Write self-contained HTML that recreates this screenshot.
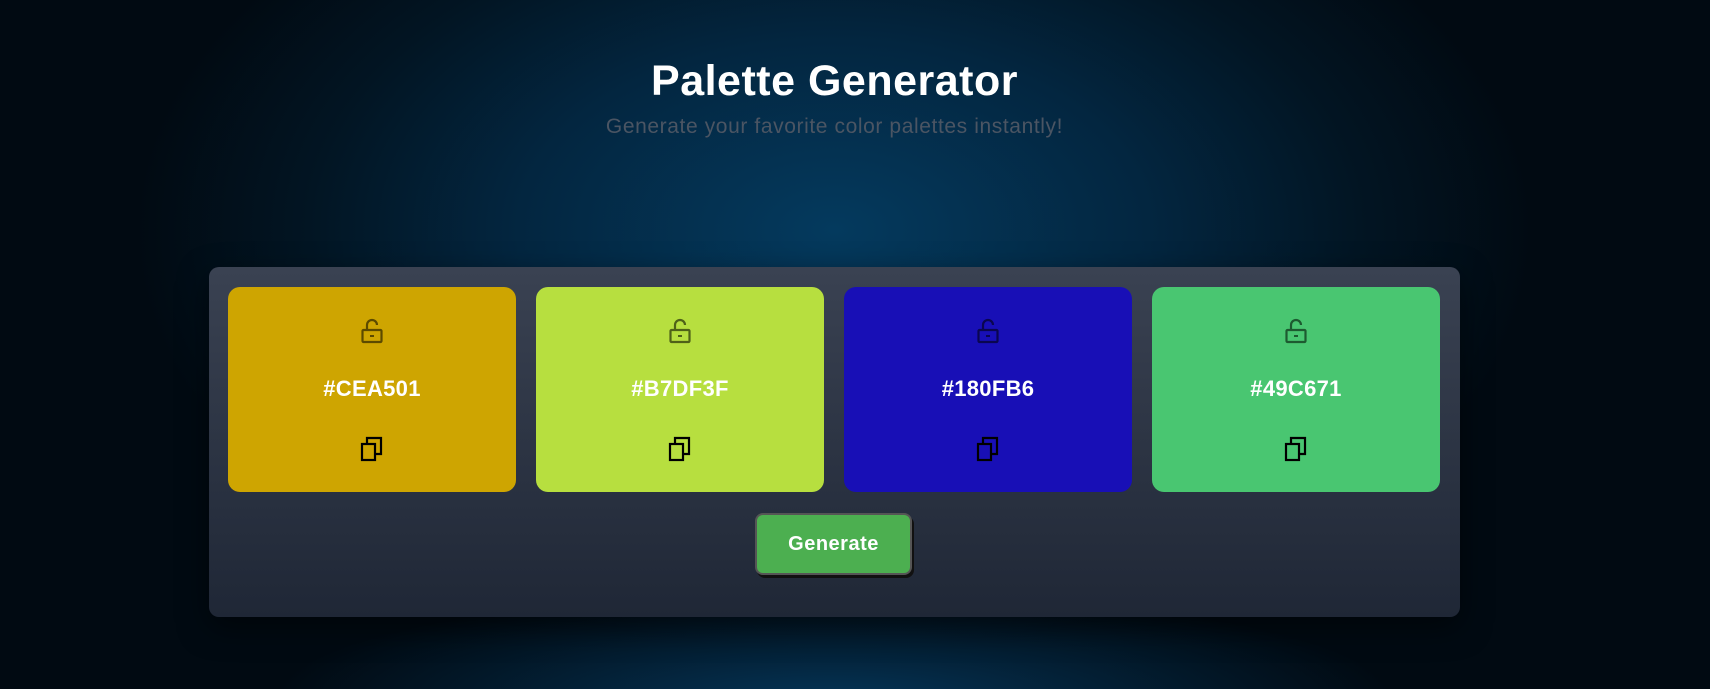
<!DOCTYPE html>
<html style="background:#010a12"><head><meta charset="utf-8"><style>
*{margin:0;padding:0;box-sizing:border-box}
html,body{width:1710px;height:689px;overflow:hidden}
body{font-family:"Liberation Sans",sans-serif;
background:radial-gradient(ellipse 700px 420px at 834px 230px,#043a5e 0%,#032640 45%,#021523 75%,#010a12 100%);position:relative}
.glow{position:absolute;left:234px;top:560px;width:1200px;height:140px;background:radial-gradient(ellipse 560px 110px at 50% 100%,#053456 0%,rgba(3,30,50,0) 100%)}
h1{position:absolute;top:57px;left:0;width:1669px;text-align:center;color:#fff;font-size:43px;font-weight:bold;letter-spacing:0.5px}
p.sub{position:absolute;top:115px;left:0;width:1669px;text-align:center;color:#4b5563;font-size:21px;letter-spacing:0.6px}
.panel{position:absolute;left:209px;top:267px;width:1251px;height:350px;border-radius:10px;background:linear-gradient(#3a4252,#1f2736);box-shadow:0 10px 30px rgba(0,0,0,.5)}
.card{position:absolute;top:20px;width:288px;height:205px;border-radius:12px}
.card svg{position:absolute;left:132px}
.hex{position:absolute;top:89px;width:100%;text-align:center;color:#fff;font-weight:bold;font-size:22px;letter-spacing:0.3px}
.btn{position:absolute;left:546px;top:246px;width:157px;height:62px;border-radius:8px;background:#4caf50;border:2px solid #555;box-shadow:2px 3px 0 #111;color:#fff;font-weight:bold;font-size:20px;letter-spacing:0.5px;text-align:center;line-height:58px}
</style></head><body>
<div class="glow"></div>
<h1>Palette Generator</h1>
<p class="sub">Generate your favorite color palettes instantly!</p>
<div class="panel">
<div class="card" style="left:19px;background:#cea501"><svg style="top:31px" width="24" height="26" viewBox="0 0 24 26" fill="none" stroke="#5c4a00" stroke-width="2.2"><path d="M7 12V7a5 5 0 0 1 10 0"/><rect x="2.5" y="12" width="19" height="12" rx="1"/><rect x="10" y="17" width="4" height="2" fill="#5c4a00" stroke="none"/></svg><div class="hex">#CEA501</div><svg style="top:149px" width="24" height="26" viewBox="0 0 24 26" fill="none" stroke="#000" stroke-width="2.2"><rect x="2" y="8" width="13" height="16"/><path d="M7 8V2h14v16h-6"/></svg></div>
<div class="card" style="left:327px;background:#b7df3f"><svg style="top:31px" width="24" height="26" viewBox="0 0 24 26" fill="none" stroke="#4f6118" stroke-width="2.2"><path d="M7 12V7a5 5 0 0 1 10 0"/><rect x="2.5" y="12" width="19" height="12" rx="1"/><rect x="10" y="17" width="4" height="2" fill="#4f6118" stroke="none"/></svg><div class="hex">#B7DF3F</div><svg style="top:149px" width="24" height="26" viewBox="0 0 24 26" fill="none" stroke="#000" stroke-width="2.2"><rect x="2" y="8" width="13" height="16"/><path d="M7 8V2h14v16h-6"/></svg></div>
<div class="card" style="left:635px;background:#180fb6"><svg style="top:31px" width="24" height="26" viewBox="0 0 24 26" fill="none" stroke="#0a0650" stroke-width="2.2"><path d="M7 12V7a5 5 0 0 1 10 0"/><rect x="2.5" y="12" width="19" height="12" rx="1"/><rect x="10" y="17" width="4" height="2" fill="#0a0650" stroke="none"/></svg><div class="hex">#180FB6</div><svg style="top:149px" width="24" height="26" viewBox="0 0 24 26" fill="none" stroke="#000" stroke-width="2.2"><rect x="2" y="8" width="13" height="16"/><path d="M7 8V2h14v16h-6"/></svg></div>
<div class="card" style="left:943px;background:#49c671"><svg style="top:31px" width="24" height="26" viewBox="0 0 24 26" fill="none" stroke="#1d5a30" stroke-width="2.2"><path d="M7 12V7a5 5 0 0 1 10 0"/><rect x="2.5" y="12" width="19" height="12" rx="1"/><rect x="10" y="17" width="4" height="2" fill="#1d5a30" stroke="none"/></svg><div class="hex">#49C671</div><svg style="top:149px" width="24" height="26" viewBox="0 0 24 26" fill="none" stroke="#000" stroke-width="2.2"><rect x="2" y="8" width="13" height="16"/><path d="M7 8V2h14v16h-6"/></svg></div>
<div class="btn">Generate</div>
</div>
</body></html>
